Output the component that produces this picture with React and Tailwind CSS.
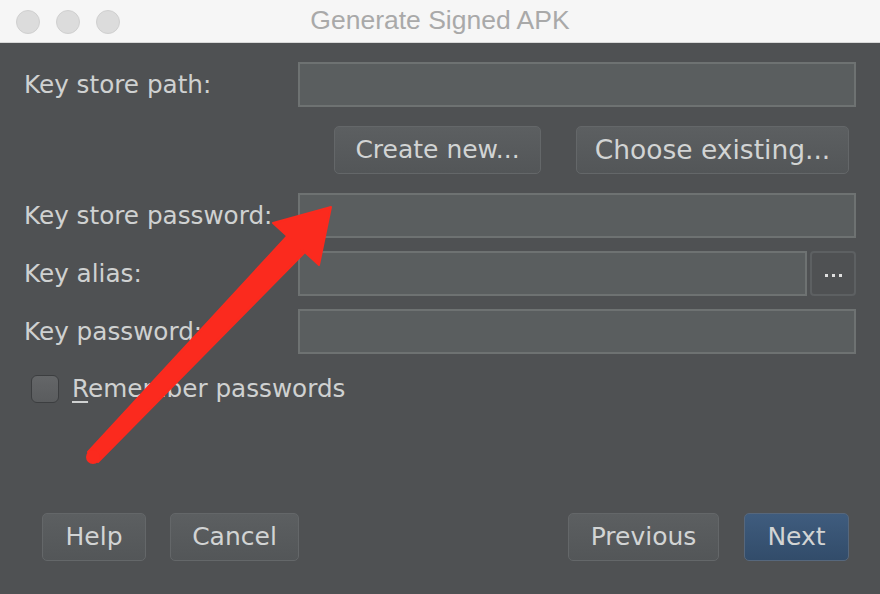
import React from "react";

const font = { fontFamily: '"DejaVu Sans", "Liberation Sans", sans-serif' };

const Field = ({ className = "" }) => (
  <div className={`h-[45px] border-2 border-[#6e7272] bg-[#5a5e5f] ${className}`}></div>
);

const Btn = ({ children, primary, className = "" }) => (
  <button
    className={`h-[48px] rounded-[5px] border text-[25px] text-[#d2d4d4] ${
      primary
        ? "border-[#56677c] bg-gradient-to-b from-[#3f5c7e] to-[#324c6a]"
        : "border-[#646769] bg-gradient-to-b from-[#5c5f61] to-[#535658]"
    } ${className}`}
  >
    {children}
  </button>
);

export default function App() {
  return (
    <div className="relative w-[880px] h-[594px] overflow-hidden bg-[#4f5153] flex flex-col" style={font}>
      {/* title bar */}
      <div className="relative h-[43px] shrink-0 bg-[#f6f6f6] border-b border-[#d8d8d8] flex items-center justify-center">
        <div className="absolute left-[16px] top-[10px] flex gap-[16px]">
          <span className="w-[24px] h-[24px] rounded-full bg-[#dcdcdc] border border-[#d0d0d0]"></span>
          <span className="w-[24px] h-[24px] rounded-full bg-[#dcdcdc] border border-[#d0d0d0]"></span>
          <span className="w-[24px] h-[24px] rounded-full bg-[#dcdcdc] border border-[#d0d0d0]"></span>
        </div>
        <span className="text-[26.5px] text-[#a9a9a9]" style={{ fontFamily: '"Liberation Sans", sans-serif' }}>
          Generate Signed APK
        </span>
      </div>

      {/* form */}
      <div className="flex-1 flex flex-col px-6 pt-[19px] text-[24.7px] text-[#cfd1d1]">
        <div className="grid grid-cols-[274px_1fr] items-center">
          <span className="whitespace-nowrap">Key store path:</span>
          <Field />
        </div>
        <div className="flex justify-end gap-[35px] pr-[7px] mt-[19px]">
          <Btn className="w-[207px]">Create new...</Btn>
          <Btn className="w-[273px] text-[26.5px]">Choose existing...</Btn>
        </div>
        <div className="grid grid-cols-[274px_1fr] items-center mt-[19px]">
          <span className="whitespace-nowrap">Key store password:</span>
          <Field />
        </div>
        <div className="grid grid-cols-[274px_1fr] items-center mt-[13px]">
          <span className="whitespace-nowrap">Key alias:</span>
          <div className="flex gap-[3px]">
            <Field className="flex-1" />
            <div className="w-[46px] h-[45px] rounded-[4px] border-2 border-[#5d6062] flex items-center justify-center gap-[4px] pt-[4px]">
              <span className="w-[3px] h-[3px] bg-[#e0e0e0]"></span>
              <span className="w-[3px] h-[3px] bg-[#e0e0e0]"></span>
              <span className="w-[3px] h-[3px] bg-[#e0e0e0]"></span>
            </div>
          </div>
        </div>
        <div className="grid grid-cols-[274px_1fr] items-center mt-[13px]">
          <span className="whitespace-nowrap">Key password:</span>
          <Field />
        </div>
        <div className="flex items-center mt-[16px] pl-[7px] gap-[13px]">
          <span className="w-[28px] h-[28px] rounded-[6px] border border-[#3c3e40] bg-gradient-to-b from-[#646668] to-[#5a5c5e]"></span>
          <span>
            <span className="underline underline-offset-4">R</span>emember passwords
          </span>
        </div>

        <div className="mt-auto mb-[33px] flex items-center pl-[18px] pr-[7px]">
          <Btn className="w-[104px]">Help</Btn>
          <Btn className="w-[129px] ml-[24px]">Cancel</Btn>
          <Btn className="w-[151px] ml-auto">Previous</Btn>
          <Btn primary className="w-[105px] ml-[25px]">Next</Btn>
        </div>
      </div>

      {/* red annotation arrow */}
      <svg className="absolute left-0 top-0 pointer-events-none" width="880" height="594" viewBox="0 0 880 594">
        <path d="M88 452 L98 462 L309 248 L291 232 Z" fill="#fb2a1e" stroke="#fb2a1e" strokeWidth="2" strokeLinejoin="round" />
        <circle cx="93" cy="457" r="7" fill="#fb2a1e" />
        <path d="M273 223 L331 207 L319 265 Z" fill="#fb2a1e" stroke="#fb2a1e" strokeWidth="2" strokeLinejoin="round" />
      </svg>
    </div>
  );
}
